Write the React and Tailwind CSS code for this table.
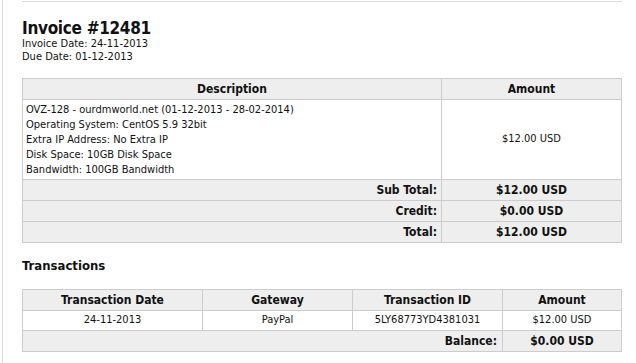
import React from "react";

const font = { fontFamily: '"DejaVu Sans Condensed", "DejaVu Sans", Tahoma, sans-serif' };

const lines = [
  "OVZ-128 - ourdmworld.net (01-12-2013 - 28-02-2014)",
  "Operating System: CentOS 5.9 32bit",
  "Extra IP Address: No Extra IP",
  "Disk Space: 10GB Disk Space",
  "Bandwidth: 100GB Bandwidth",
];

const cell = "border border-[#cccccc]";

function TotalRow({ label, value }) {
  return (
    <tr className="h-[21px] bg-[#eeeeee]">
      <td className={`${cell} text-right pr-[4px] font-bold text-[12px]`}>{label}</td>
      <td className={`${cell} text-center font-bold text-[12px]`}>{value}</td>
    </tr>
  );
}

export default function App() {
  return (
    <div className="w-[636px] h-[363px] overflow-hidden bg-white text-[#111] flex" style={font}>
      <div className="ml-[2px] border-l border-[#dddddd]" />
      <div className="pl-[19px] w-[619px] flex flex-col">
        <div className="mt-[1px] h-px bg-[#dddddd] w-[600px]" />

        <h1 className="mt-[16px] text-[17px] leading-[20px] font-bold tracking-[-0.3px]">Invoice #12481</h1>
        <div className="text-[11px] leading-[12px]">Invoice Date: 24-11-2013</div>
        <div className="text-[11px] leading-[12px] mt-[1px]">Due Date: 01-12-2013</div>

        <table className="mt-[15px] w-[600px] border-collapse text-[11px]">
          <colgroup>
            <col className="w-[419px]" />
            <col />
          </colgroup>
          <thead>
            <tr className="h-[21px] bg-[#eeeeee]">
              <th className={`${cell} font-bold text-[12px]`}>Description</th>
              <th className={`${cell} font-bold text-[12px]`}>Amount</th>
            </tr>
          </thead>
          <tbody>
            <tr className="h-[80px]">
              <td className={`${cell} px-[3px] align-middle leading-[15px]`}>
                {lines.map((l) => (
                  <div key={l}>{l}</div>
                ))}
              </td>
              <td className={`${cell} text-center`}>$12.00 USD</td>
            </tr>
            <TotalRow label="Sub Total:" value="$12.00 USD" />
            <TotalRow label="Credit:" value="$0.00 USD" />
            <TotalRow label="Total:" value="$12.00 USD" />
          </tbody>
        </table>

        <h2 className="mt-[16px] text-[13px] leading-[14px] font-bold">Transactions</h2>

        <table className="mt-[16px] w-[600px] border-collapse text-[11px]">
          <colgroup>
            <col className="w-[180px]" />
            <col className="w-[150px]" />
            <col className="w-[150px]" />
            <col />
          </colgroup>
          <thead>
            <tr className="h-[21px] bg-[#eeeeee]">
              <th className={`${cell} font-bold text-[12px]`}>Transaction Date</th>
              <th className={`${cell} font-bold text-[12px]`}>Gateway</th>
              <th className={`${cell} font-bold text-[12px]`}>Transaction ID</th>
              <th className={`${cell} font-bold text-[12px]`}>Amount</th>
            </tr>
          </thead>
          <tbody>
            <tr className="h-[20px]">
              <td className={`${cell} text-center`}>24-11-2013</td>
              <td className={`${cell} text-center`}>PayPal</td>
              <td className={`${cell} text-center`}>5LY68773YD4381031</td>
              <td className={`${cell} text-center`}>$12.00 USD</td>
            </tr>
            <tr className="h-[21px] bg-[#eeeeee]">
              <td colSpan={3} className={`${cell} text-right pr-[5px] font-bold text-[12px]`}>
                Balance:
              </td>
              <td className={`${cell} text-center font-bold text-[12px]`}>$0.00 USD</td>
            </tr>
          </tbody>
        </table>
      </div>
    </div>
  );
}
